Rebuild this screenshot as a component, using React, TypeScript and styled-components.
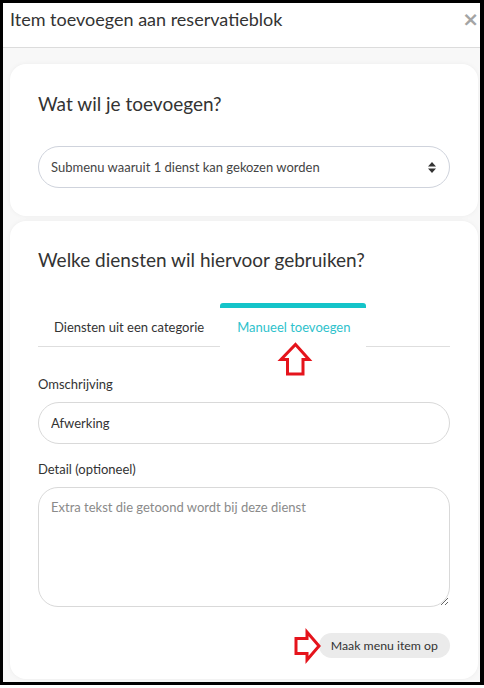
import React from "react";
import styled, { createGlobalStyle } from "styled-components";

const GlobalStyle = createGlobalStyle`
  html, body { margin: 0; padding: 0; background: #ffffff; }
  body { font-family: Lato, "Noto Sans", Arial, sans-serif; color: #333; }
  * { box-sizing: border-box; }
`;

const Frame = styled.div`
  width: 484px;
  height: 685px;
  border: 3px solid #000;
  border-right-width: 4px;
  background: #fff;
  display: flex;
  flex-direction: column;
  overflow: hidden;
  position: relative;
`;

const Header = styled.div`
  height: 45px;
  flex: none;
  display: flex;
  align-items: flex-start;
  justify-content: space-between;
  padding: 5px 1px 0 7px;
  border-bottom: 1px solid #dcdcdc;
`;

const Title = styled.h4`
  margin: 0;
  font-size: 18px;
  font-weight: 400;
  line-height: 22px;
  color: #333;
`;

const Close = styled.span`
  font-family: "DejaVu Sans", sans-serif;
  font-size: 20px;
  font-weight: 700;
  line-height: 22px;
  color: #a4a4a4;
`;

const Body = styled.div`
  flex: 1;
  background: #f8f8f8;
  padding: 16px 2px 0 7px;
  display: flex;
  flex-direction: column;
  gap: 5px;
`;

const Card = styled.section<{ $pt: number; $pb: number }>`
  background: #fff;
  border-radius: 16px;
  box-shadow: 0 0 5px rgba(0, 0, 0, 0.05);
  padding: ${(p) => p.$pt}px 28px ${(p) => p.$pb}px 28px;
`;

const Heading = styled.h3`
  margin: 0;
  font-size: 19px;
  font-weight: 400;
  line-height: 23px;
  color: #333;
`;

const SelectBox = styled.div`
  margin-top: 31px;
  height: 42px;
  border: 1px solid #cfd3dc;
  border-radius: 21px;
  display: flex;
  align-items: center;
  justify-content: space-between;
  padding: 0 13px 0 12px;
  font-size: 13px;
  color: #444;
`;

const Tabs = styled.div`
  margin-top: 32px;
  display: flex;
  align-items: stretch;
  height: 44px;
`;

const Tab = styled.div<{ $active?: boolean }>`
  display: flex;
  align-items: center;
  padding: 0 16px 0 ${(p) => (p.$active ? 17 : 16)}px;
  font-size: 13px;
  color: ${(p) => (p.$active ? "#2ec2cc" : "#333")};
  border-top: 5px solid ${(p) => (p.$active ? "#14c4c9" : "transparent")};
  border-top-left-radius: 3px;
  border-top-right-radius: 3px;
  border-bottom: 1px solid ${(p) => (p.$active ? "transparent" : "#dedede")};
`;

const TabFiller = styled.div`
  flex: 1;
  border-bottom: 1px solid #dedede;
`;

const Label = styled.label<{ $mt: number }>`
  display: block;
  margin-top: ${(p) => p.$mt}px;
  font-size: 13px;
  line-height: 18px;
  color: #333;
`;

const TextInput = styled.input`
  display: block;
  width: 100%;
  margin-top: 9px;
  height: 42px;
  border: 1px solid #d9d9d9;
  border-radius: 21px;
  padding: 0 12px;
  font-family: inherit;
  font-size: 13px;
  color: #333;
  background: #fff;
  outline: none;
`;

const TextArea = styled.textarea`
  display: block;
  width: 100%;
  margin-top: 9px;
  height: 120px;
  border: 1px solid #d9d9d9;
  border-radius: 20px;
  padding: 11px 12px;
  font-family: inherit;
  font-size: 13px;
  color: #333;
  background: #fff;
  resize: vertical;
  outline: none;
  &::placeholder { color: #8a8a8a; }
`;

const Actions = styled.div`
  margin-top: 26px;
  display: flex;
  justify-content: flex-end;
`;

const Button = styled.button`
  height: 25px;
  border: none;
  border-radius: 13px;
  background: #ebebeb;
  padding: 0 12px;
  font-family: inherit;
  font-size: 12.3px;
  color: #333;
`;

const Annotation = styled.svg<{ $x: number; $y: number }>`
  position: absolute;
  left: ${(p) => p.$x}px;
  top: ${(p) => p.$y}px;
  overflow: visible;
`;

const UpDown = () => (
  <svg width="8" height="11" viewBox="0 0 8 11">
    <path d="M4 0 L8 4.5 H0 Z M0 6.5 H8 L4 11 Z" fill="#333" />
  </svg>
);

export default function App() {
  return (
    <>
      <GlobalStyle />
      <Frame>
        <Header>
          <Title>Item toevoegen aan reservatieblok</Title>
          <Close>×</Close>
        </Header>
        <Body>
          <Card $pt={28} $pb={28}>
            <Heading>Wat wil je toevoegen?</Heading>
            <SelectBox>
              <span>Submenu waaruit 1 dienst kan gekozen worden</span>
              <UpDown />
            </SelectBox>
          </Card>
          <Card $pt={27} $pb={21}>
            <Heading>Welke diensten wil hiervoor gebruiken?</Heading>
            <Tabs>
              <Tab>Diensten uit een categorie</Tab>
              <Tab $active>Manueel toevoegen</Tab>
              <TabFiller />
            </Tabs>
            <Label $mt={28}>Omschrijving</Label>
            <TextInput defaultValue="Afwerking" />
            <Label $mt={16}>Detail (optioneel)</Label>
            <TextArea placeholder="Extra tekst die getoond wordt bij deze dienst" />
            <Actions>
              <Button>Maak menu item op</Button>
            </Actions>
          </Card>
        </Body>
        <Annotation $x={274} $y={335} width="36" height="40">
          <polygon
            points="18.5,6.5 32,21.5 26,21.5 26,36 10.5,36 10.5,21.5 4,21.5"
            fill="#fff"
            stroke="#e5141c"
            strokeWidth="3"
          />
        </Annotation>
        <Annotation $x={287} $y={624} width="36" height="38">
          <polygon
            points="6,11.5 17,11.5 17,5 29,19 17,33 17,26.5 6,26.5"
            fill="#fff"
            stroke="#e5141c"
            strokeWidth="3"
          />
        </Annotation>
      </Frame>
    </>
  );
}
